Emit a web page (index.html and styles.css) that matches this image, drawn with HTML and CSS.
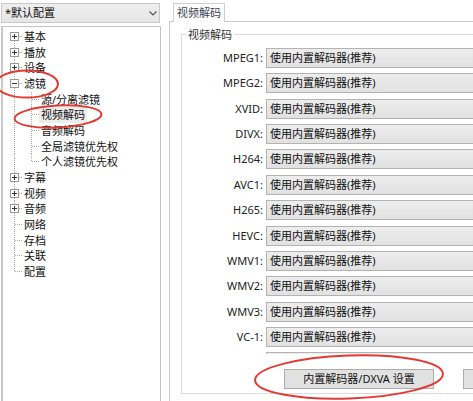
FILE: index.html
```html
<!DOCTYPE html>
<html lang="zh-CN">
<head>
<meta charset="utf-8">
<title>视频解码</title>
<link rel="stylesheet" href="styles.css">
</head>
<body>
<div class="app">
  <aside class="left">
    <div class="profile">
      <span>*默认配置</span>
      <svg class="chev" width="8" height="5" viewBox="0 0 8 5"><path d="M0.5 0.5 L4 4 L7.5 0.5" fill="none" stroke="#555" stroke-width="1.2"/></svg>
    </div>
    <div class="tree">
      <div class="row"><svg class="g1" viewBox="0 0 19 15.67"><g class="dots"><line x1="11.5" y1="12" x2="11.5" y2="15.67"/><line x1="16" y1="7.5" x2="19" y2="7.5"/></g><rect class="box" x="7.5" y="3.5" width="8" height="8"/><path class="sign" d="M9 7.5H14M11.5 5V10"/></svg><span class="lbl">基本</span></div>
      <div class="row"><svg class="g1" viewBox="0 0 19 15.67"><g class="dots"><line x1="11.5" y1="0" x2="11.5" y2="15.67"/><line x1="16" y1="7.5" x2="19" y2="7.5"/></g><rect class="box" x="7.5" y="3.5" width="8" height="8"/><path class="sign" d="M9 7.5H14M11.5 5V10"/></svg><span class="lbl">播放</span></div>
      <div class="row"><svg class="g1" viewBox="0 0 19 15.67"><g class="dots"><line x1="11.5" y1="0" x2="11.5" y2="15.67"/><line x1="16" y1="7.5" x2="19" y2="7.5"/></g><rect class="box" x="7.5" y="3.5" width="8" height="8"/><path class="sign" d="M9 7.5H14M11.5 5V10"/></svg><span class="lbl">设备</span></div>
      <div class="row"><svg class="g1" viewBox="0 0 19 15.67"><g class="dots"><line x1="11.5" y1="0" x2="11.5" y2="15.67"/><line x1="16" y1="7.5" x2="19" y2="7.5"/></g><rect class="box" x="7.5" y="3.5" width="8" height="8"/><path class="sign" d="M9 7.5H14"/></svg><span class="lbl">滤镜</span></div>
      <div class="row"><svg class="g2" viewBox="0 0 36 15.67"><g class="dots"><line x1="11.5" y1="0" x2="11.5" y2="15.67"/><line x1="28.5" y1="0" x2="28.5" y2="15.67"/><line x1="29" y1="7.5" x2="36" y2="7.5"/></g></svg><span class="lbl">源/分离滤镜</span></div>
      <div class="row"><svg class="g2" viewBox="0 0 36 15.67"><g class="dots"><line x1="11.5" y1="0" x2="11.5" y2="15.67"/><line x1="28.5" y1="0" x2="28.5" y2="15.67"/><line x1="29" y1="7.5" x2="36" y2="7.5"/></g></svg><span class="lbl sel">视频解码</span></div>
      <div class="row"><svg class="g2" viewBox="0 0 36 15.67"><g class="dots"><line x1="11.5" y1="0" x2="11.5" y2="15.67"/><line x1="28.5" y1="0" x2="28.5" y2="15.67"/><line x1="29" y1="7.5" x2="36" y2="7.5"/></g></svg><span class="lbl">音频解码</span></div>
      <div class="row"><svg class="g2" viewBox="0 0 36 15.67"><g class="dots"><line x1="11.5" y1="0" x2="11.5" y2="15.67"/><line x1="28.5" y1="0" x2="28.5" y2="15.67"/><line x1="29" y1="7.5" x2="36" y2="7.5"/></g></svg><span class="lbl">全局滤镜优先权</span></div>
      <div class="row"><svg class="g2" viewBox="0 0 36 15.67"><g class="dots"><line x1="11.5" y1="0" x2="11.5" y2="15.67"/><line x1="28.5" y1="0" x2="28.5" y2="7.5"/><line x1="29" y1="7.5" x2="36" y2="7.5"/></g></svg><span class="lbl">个人滤镜优先权</span></div>
      <div class="row"><svg class="g1" viewBox="0 0 19 15.67"><g class="dots"><line x1="11.5" y1="0" x2="11.5" y2="15.67"/><line x1="16" y1="7.5" x2="19" y2="7.5"/></g><rect class="box" x="7.5" y="3.5" width="8" height="8"/><path class="sign" d="M9 7.5H14M11.5 5V10"/></svg><span class="lbl">字幕</span></div>
      <div class="row"><svg class="g1" viewBox="0 0 19 15.67"><g class="dots"><line x1="11.5" y1="0" x2="11.5" y2="15.67"/><line x1="16" y1="7.5" x2="19" y2="7.5"/></g><rect class="box" x="7.5" y="3.5" width="8" height="8"/><path class="sign" d="M9 7.5H14M11.5 5V10"/></svg><span class="lbl">视频</span></div>
      <div class="row"><svg class="g1" viewBox="0 0 19 15.67"><g class="dots"><line x1="11.5" y1="0" x2="11.5" y2="15.67"/><line x1="16" y1="7.5" x2="19" y2="7.5"/></g><rect class="box" x="7.5" y="3.5" width="8" height="8"/><path class="sign" d="M9 7.5H14M11.5 5V10"/></svg><span class="lbl">音频</span></div>
      <div class="row"><svg class="g1" viewBox="0 0 19 15.67"><g class="dots"><line x1="11.5" y1="0" x2="11.5" y2="15.67"/><line x1="12" y1="7.5" x2="19" y2="7.5"/></g></svg><span class="lbl">网络</span></div>
      <div class="row"><svg class="g1" viewBox="0 0 19 15.67"><g class="dots"><line x1="11.5" y1="0" x2="11.5" y2="15.67"/><line x1="12" y1="7.5" x2="19" y2="7.5"/></g></svg><span class="lbl">存档</span></div>
      <div class="row"><svg class="g1" viewBox="0 0 19 15.67"><g class="dots"><line x1="11.5" y1="0" x2="11.5" y2="15.67"/><line x1="12" y1="7.5" x2="19" y2="7.5"/></g></svg><span class="lbl">关联</span></div>
      <div class="row"><svg class="g1" viewBox="0 0 19 15.67"><g class="dots"><line x1="11.5" y1="0" x2="11.5" y2="7.5"/><line x1="12" y1="7.5" x2="19" y2="7.5"/></g></svg><span class="lbl">配置</span></div>
    </div>
  </aside>
  <main class="right">
    <div class="tabs"><div class="tab">视频解码</div></div>
    <div class="page">
      <div class="group">
        <div class="gtitle">视频解码</div>
        <div class="list">
          <label>MPEG1:</label><div class="combo">使用内置解码器(推荐)</div>
          <label>MPEG2:</label><div class="combo">使用内置解码器(推荐)</div>
          <label>XVID:</label><div class="combo">使用内置解码器(推荐)</div>
          <label>DIVX:</label><div class="combo">使用内置解码器(推荐)</div>
          <label>H264:</label><div class="combo">使用内置解码器(推荐)</div>
          <label>AVC1:</label><div class="combo">使用内置解码器(推荐)</div>
          <label>H265:</label><div class="combo">使用内置解码器(推荐)</div>
          <label>HEVC:</label><div class="combo">使用内置解码器(推荐)</div>
          <label>WMV1:</label><div class="combo">使用内置解码器(推荐)</div>
          <label>WMV2:</label><div class="combo">使用内置解码器(推荐)</div>
          <label>WMV3:</label><div class="combo">使用内置解码器(推荐)</div>
          <label>VC-1:</label><div class="combo">使用内置解码器(推荐)</div>
          <span class="spacer"></span><div class="combo"></div>
        </div>
        <div class="buttons">
          <button class="btn">内置解码器/DXVA 设置</button>
          <button class="btn btn2"></button>
        </div>
      </div>
    </div>
  </main>
  <svg class="marks" width="473" height="401" viewBox="0 0 473 401">
    <g fill="none" stroke="#e23a33" stroke-width="2">
      <ellipse cx="27" cy="84" rx="31" ry="13.5"/>
      <ellipse cx="58" cy="116.5" rx="43.5" ry="11" transform="rotate(-3 58 116.5)"/>
      <ellipse cx="349" cy="377" rx="94" ry="21.5" transform="rotate(-2 349 377)"/>
    </g>
  </svg>
</div>
</body>
</html>
```
FILE: styles.css
```css
* { box-sizing: border-box; }
html, body { margin: 0; padding: 0; background: #fff; }
body {
  font-family: "Noto Sans", "Noto Sans CJK SC", sans-serif;
  font-size: 11px;
  color: #111;
}
.app {
  position: relative;
  display: flex;
  width: 473px;
  height: 401px;
  overflow: hidden;
}
.left {
  flex: none;
  width: 160px;
  margin-left: 1px;
  display: flex;
  flex-direction: column;
}
.profile {
  margin-top: 3px;
  height: 20px;
  width: 159px;
  border: 1px solid #c8c8c8;
  background: linear-gradient(#eeeeee, #e6e6e6);
  display: flex;
  align-items: center;
  justify-content: space-between;
  padding: 0 2px 0 3px;
  line-height: 18px;
}
.chev { display: block; width: 8px; height: 5px; }
.tree {
  margin-top: 3px;
  margin-bottom: -4px;
  flex: 1;
  border: 1px solid #c4c4c4;
  border-left: 2px solid #cacaca;
  padding-top: 2px;
  background: #fff;
}
.row {
  display: flex;
  align-items: center;
  height: 15.67px;
}
.g1, .g2 { flex: none; display: block; height: 15.67px; }
.g1 { width: 19px; }
.g2 { width: 36px; }
.dots line { stroke: #a8a8a8; stroke-width: 1; stroke-dasharray: 1 1; }
.box { fill: #fff; stroke: #9a9a9a; stroke-width: 1; }
.sign { stroke: #333; stroke-width: 1; fill: none; }
.lbl {
  padding: 0 2px;
  line-height: 15.67px;
  white-space: nowrap;
}
.lbl.sel { background: #ececec; }

.right {
  flex: none;
  width: 420px;
  margin-left: 8px;
  display: flex;
  flex-direction: column;
}
.tabs {
  display: flex;
  height: 21px;
  padding: 3px 0 0 4px;
}
.tab {
  position: relative;
  z-index: 1;
  height: 19px;
  border: 1px solid #d0d0d0;
  border-bottom: none;
  background: #fff;
  padding: 0 3px;
  line-height: 17px;
  color: #3c4454;
}
.page {
  flex: 1;
  border-left: 1px solid #c8c8c8;
  border-top: 1px solid #c8c8c8;
  padding: 12px 0 0 11px;
}
.group {
  border: 1px solid #dcdcdc;
  padding-bottom: 4px;
}
.gtitle {
  margin: -8px 0 0 4px;
  padding: 0 2px;
  width: max-content;
  background: #fff;
  line-height: 15px;
  color: #333;
}
.list {
  margin-top: 6px;
  height: 306px;
  overflow: hidden;
  display: grid;
  grid-template-columns: 81px 1fr;
  grid-auto-rows: 20px;
  column-gap: 3px;
  row-gap: 5.36px;
  align-content: start;
}
.list label {
  text-align: right;
  line-height: 20px;
  color: #222;
  white-space: nowrap;
}
.combo {
  border: 1px solid #b3b3b3;
  background: linear-gradient(#ededed, #e1e1e1);
  line-height: 18px;
  padding-left: 3px;
  white-space: nowrap;
}
.buttons {
  margin-top: 15px;
  padding-left: 102px;
  display: flex;
  gap: 29px;
}
.btn {
  flex: none;
  width: 150px;
  height: 20px;
  border: 1px solid #adadad;
  background: #e1e1e1;
  font: inherit;
  color: #111;
  padding: 0;
  line-height: 18px;
}
.btn2 { width: 100px; }
.marks {
  position: absolute;
  left: 0;
  top: 0;
  pointer-events: none;
}
```
